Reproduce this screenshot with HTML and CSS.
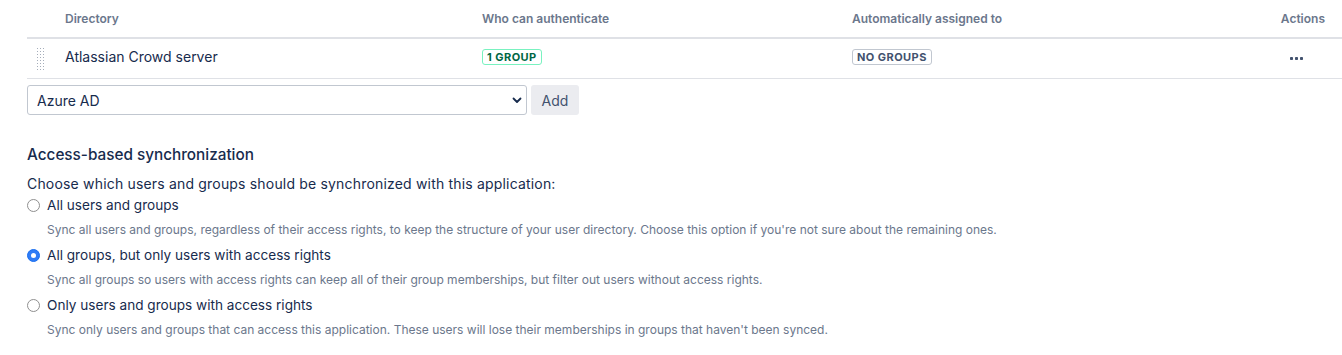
FILE: index.html
```html
<!DOCTYPE html>
<html lang="en">
<head>
  <meta charset="UTF-8">
  <title>Directories</title>
  <link rel="stylesheet" href="styles.css">
</head>
<body>

<div class="page">
  <div class="dir-table">
    <div class="dir-head">
      <div></div>
      <div>Directory</div>
      <div>Who can authenticate</div>
      <div>Automatically assigned to</div>
      <div class="actions">Actions</div>
    </div>
    <div class="dir-row">
      <div class="handle">
        <svg width="9" height="22" viewBox="0 0 9 22">
          <g fill="#a5adba">
            <rect x="0" y="0" width="1" height="1"/><rect x="3" y="0" width="1" height="1"/><rect x="6" y="0" width="1" height="1"/>
            <rect x="0" y="3" width="1" height="1"/><rect x="3" y="3" width="1" height="1"/><rect x="6" y="3" width="1" height="1"/>
            <rect x="0" y="6" width="1" height="1"/><rect x="3" y="6" width="1" height="1"/><rect x="6" y="6" width="1" height="1"/>
            <rect x="0" y="9" width="1" height="1"/><rect x="3" y="9" width="1" height="1"/><rect x="6" y="9" width="1" height="1"/>
            <rect x="0" y="12" width="1" height="1"/><rect x="3" y="12" width="1" height="1"/><rect x="6" y="12" width="1" height="1"/>
            <rect x="0" y="15" width="1" height="1"/><rect x="3" y="15" width="1" height="1"/><rect x="6" y="15" width="1" height="1"/>
            <rect x="0" y="18" width="1" height="1"/><rect x="3" y="18" width="1" height="1"/><rect x="6" y="18" width="1" height="1"/>
            <rect x="0" y="21" width="1" height="1"/><rect x="3" y="21" width="1" height="1"/><rect x="6" y="21" width="1" height="1"/>
          </g>
        </svg>
      </div>
      <div class="dir-name">Atlassian Crowd server</div>
      <div><span class="lozenge success">1 group</span></div>
      <div><span class="lozenge default">No groups</span></div>
      <div class="actions">
        <svg class="more" width="14" height="4" viewBox="0 0 14 4">
          <g fill="#42526e">
            <rect x="0" y="1" width="3" height="3" rx="0.8"/>
            <rect x="5" y="1" width="3" height="3" rx="0.8"/>
            <rect x="10" y="1" width="3" height="3" rx="0.8"/>
          </g>
        </svg>
      </div>
    </div>
  </div>

  <div class="add-row">
    <div class="select-wrap">
      <select class="dir-select">
        <option>Azure AD</option>
      </select>
      <svg class="chevron" width="10" height="7" viewBox="0 0 10 7">
        <path d="M1.5 1.5 L5 5 L8.5 1.5" fill="none" stroke="#172b4d" stroke-width="1.8" stroke-linecap="round" stroke-linejoin="round"/>
      </svg>
    </div>
    <button class="btn">Add</button>
  </div>

  <h3 class="section-title">Access-based synchronization</h3>
  <p class="intro">Choose which users and groups should be synchronized with this application:</p>

  <div class="options">
    <label class="option">
      <input type="radio" name="sync">
      <span>All users and groups</span>
    </label>
    <div class="desc">Sync all users and groups, regardless of their access rights, to keep the structure of your user directory. Choose this option if you're not sure about the remaining ones.</div>

    <label class="option">
      <input type="radio" name="sync" checked>
      <span>All groups, but only users with access rights</span>
    </label>
    <div class="desc">Sync all groups so users with access rights can keep all of their group memberships, but filter out users without access rights.</div>

    <label class="option">
      <input type="radio" name="sync">
      <span>Only users and groups with access rights</span>
    </label>
    <div class="desc">Sync only users and groups that can access this application. These users will lose their memberships in groups that haven't been synced.</div>
  </div>
</div>

</body>
</html>
```

FILE: styles.css
```css
body {
  margin: 0;
  font-family: Inter, "Noto Sans", sans-serif;
  color: #172b4d;
  background: #fff;
}

.page {
  padding-left: 27px;
}

.dir-head,
.dir-row {
  display: grid;
  grid-template-columns: 38px 417px 370px 1fr 120px;
  align-items: center;
}

.dir-head {
  height: 37px;
  border-bottom: 2px solid #dfe1e6;
  font-size: 12px;
  font-weight: 600;
  color: #6b778c;
}

.dir-row {
  height: 39px;
  border-bottom: 1px solid #dfe1e6;
  font-size: 14px;
}

.actions {
  text-align: right;
  padding-right: 17px;
}

.handle {
  display: flex;
  padding-left: 10px;
  padding-top: 1px;
}

.handle svg {
  display: block;
}

.dir-name {
  padding-bottom: 5px;
}

.lozenge {
  display: inline-block;
  font-size: 11px;
  font-weight: 700;
  text-transform: uppercase;
  letter-spacing: 0.45px;
  line-height: 12px;
  padding: 1px 4px;
  border-radius: 3px;
  position: relative;
  top: -3px;
}

.lozenge.success {
  color: #006644;
  border: 1px solid #79f2c0;
}

.lozenge.default {
  color: #42526e;
  border: 1px solid #c1c7d0;
}

.more {
  display: inline-block;
  margin-right: 21px;
  vertical-align: middle;
  position: relative;
  top: -2px;
}

.add-row {
  display: flex;
  gap: 4px;
  margin-top: 6px;
}

.select-wrap {
  position: relative;
  width: 500px;
}

.dir-select {
  appearance: none;
  -webkit-appearance: none;
  width: 100%;
  height: 30px;
  border: 1px solid #c1c7d0;
  border-radius: 3px;
  background: #fff;
  font-family: inherit;
  font-size: 14px;
  color: #172b4d;
  padding: 0 9px;
}

.chevron {
  position: absolute;
  right: 5px;
  top: 12px;
}

.btn {
  width: 48px;
  height: 30px;
  border: none;
  border-radius: 3px;
  background: #ebecf0;
  color: #42526e;
  font-family: inherit;
  font-size: 14px;
}

.section-title {
  font-size: 15.3px;
  font-weight: 500;
  margin: 29px 0 0;
  line-height: 22px;
}

.intro {
  font-size: 14px;
  letter-spacing: 0.18px;
  margin: 8px 0 0;
  line-height: 20px;
}

.option {
  display: flex;
  align-items: center;
  gap: 7px;
  font-size: 13.6px;
  height: 22px;
  margin-top: 0;
}

.option input {
  appearance: none;
  -webkit-appearance: none;
  margin: 0;
  width: 13px;
  height: 13px;
  border: 1px solid #8f8f8f;
  border-radius: 50%;
  background: #fff;
  display: grid;
  place-items: center;
}

.option input:checked {
  border-color: #1a6ff0;
  background: #2f7cf6;
}

.option input:checked::after {
  content: "";
  width: 5px;
  height: 5px;
  border-radius: 50%;
  background: #fff;
}

.desc {
  font-size: 12px;
  color: #6b778c;
  padding-left: 20px;
  margin-top: 6px;
  margin-bottom: 6px;
  line-height: 16px;
}
```
